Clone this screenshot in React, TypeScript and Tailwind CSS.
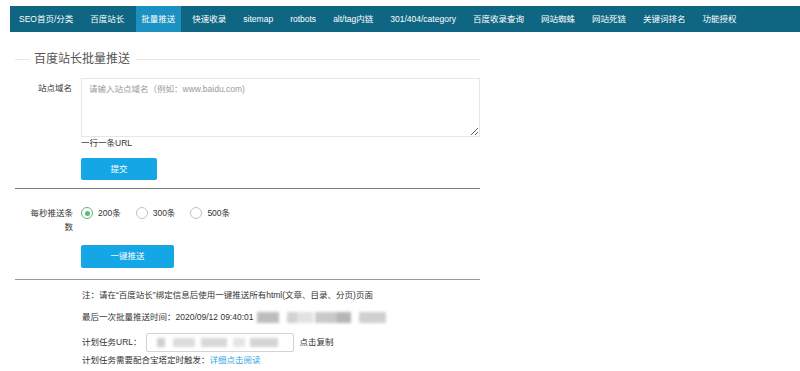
import React from "react";

const navItems = [
  "SEO首页/分类",
  "百度站长",
  "批量推送",
  "快速收录",
  "sitemap",
  "rotbots",
  "alt/tag内链",
  "301/404/category",
  "百度收录查询",
  "网站蜘蛛",
  "网站死链",
  "关键词排名",
  "功能授权",
];

function Radio({ checked, label }: { checked?: boolean; label: string }) {
  return (
    <div className="flex items-center">
      <span
        className={
          checked
            ? "w-[12px] h-[12px] rounded-full border border-[#5fb878] flex items-center justify-center"
            : "w-[12px] h-[12px] rounded-full border border-[#c2c2c2]"
        }
      >
        {checked && <span className="w-[5px] h-[5px] rounded-full bg-[#5fb878]" />}
      </span>
      <span className="ml-[5px] text-[#333]">{label}</span>
    </div>
  );
}

export default function App() {
  return (
    <div
      className="w-[800px] h-[371px] bg-white overflow-hidden pt-[6px] text-[8.5px] leading-[13px] text-[#333]"
      style={{ fontFamily: '"Liberation Sans", "Noto Sans CJK SC", sans-serif' }}
    >
      <nav className="ml-[10px] h-[26px] bg-[#0e6683] flex items-stretch pl-[3.5px] gap-[6px]">
        {navItems.map((t) => (
          <div
            key={t}
            className={
              t === "批量推送"
                ? "px-[5.5px] flex items-center text-white bg-[#1b91c2]"
                : "px-[5.5px] flex items-center text-white"
            }
          >
            {t}
          </div>
        ))}
      </nav>

      <div className="ml-[15px] w-[465px]">
        <div className="mt-[19px] h-[16px] flex items-center">
          <div className="w-[15px] h-px bg-[#e6e6e6]" />
          <div className="ml-[4px] mr-[6px] text-[12px] leading-[16px] text-[#555]">百度站长批量推送</div>
          <div className="flex-1 h-px bg-[#e6e6e6]" />
        </div>

        <div className="mt-[11px] flex">
          <div className="w-[66px] pr-[9px] pt-[3.5px] text-right">站点域名</div>
          <div className="flex-1 flex flex-col">
            <textarea
              className="w-[399px] h-[59px] border border-[#e6e6e6] px-[7px] py-[3.5px] text-[8.5px] leading-[13px] outline-none placeholder:text-[#999] resize-y"
              placeholder="请输入站点域名（例如：www.baidu.com)"
            />
            <div className="leading-[12px] h-[12px]">一行一条URL</div>
            <button className="mt-[9px] w-[76px] h-[22px] bg-[#15a6e6] rounded-[2px] text-white">提交</button>
          </div>
        </div>

        <div className="mt-[8px] h-px bg-[#7a7a7a]" />

        <div className="mt-[17px] flex">
          <div className="w-[66px] pl-[12px] pr-[8px] text-right leading-[14px]">每秒推送条数</div>
          <div className="flex items-start">
            <div className="flex items-center h-[14px] gap-[15px]">
              <Radio checked label="200条" />
              <Radio label="300条" />
              <Radio label="500条" />
            </div>
          </div>
        </div>

        <div className="ml-[66px] mt-[11px]">
          <button className="w-[93px] h-[23px] bg-[#15a6e6] rounded-[2px] text-white">一键推送</button>
        </div>

        <div className="mt-[11px] h-px bg-[#9a9a9a]" />

        <div className="ml-[67px]">
          <div className="mt-[9px]">注：请在“百度站长”绑定信息后使用一键推送所有html(文章、目录、分页)页面</div>
          <div className="mt-[9px] flex items-center">
            <span>最后一次批量推送时间：2020/09/12 09:40:01</span>
            <div className="ml-[3px] flex items-center h-[13px] blur-[1.5px]">
              <div className="w-[22px] h-[11px] bg-[#bdbdbd]" />
              <div className="ml-[8px] w-[10px] h-[11px] bg-[#d2d2d2]" />
              <div className="w-[16px] h-[11px] bg-[#e2e2e2]" />
              <div className="ml-[2px] w-[22px] h-[11px] bg-[#c9c9c9]" />
              <div className="w-[14px] h-[11px] bg-[#b5b5b5]" />
              <div className="ml-[8px] w-[27px] h-[11px] bg-[#d0d0d0]" />
            </div>
          </div>
          <div className="mt-[8.5px] flex items-center h-[19px]">
            <span>计划任务URL：</span>
            <div className="ml-[4px] w-[148px] h-[19px] border border-[#d2d2d2] rounded-[2px] flex items-center pl-[10px]">
              <div className="flex items-center blur-[1.5px]">
                <div className="w-[8px] h-[9px] bg-[#cfcfcf]" />
                <div className="ml-[8px] w-[22px] h-[9px] bg-[#dcdcdc]" />
                <div className="ml-[6px] w-[26px] h-[9px] bg-[#d8d8d8]" />
                <div className="ml-[6px] w-[12px] h-[9px] bg-[#e4e4e4]" />
                <div className="ml-[5px] w-[28px] h-[9px] bg-[#d4d4d4]" />
              </div>
            </div>
            <span className="ml-[6px]">点击复制</span>
          </div>
          <div className="mt-[2.5px]">
            计划任务需要配合宝塔定时触发：<span className="text-[#2fa4e7]">详细点击阅读</span>
          </div>
        </div>
      </div>
    </div>
  );
}
